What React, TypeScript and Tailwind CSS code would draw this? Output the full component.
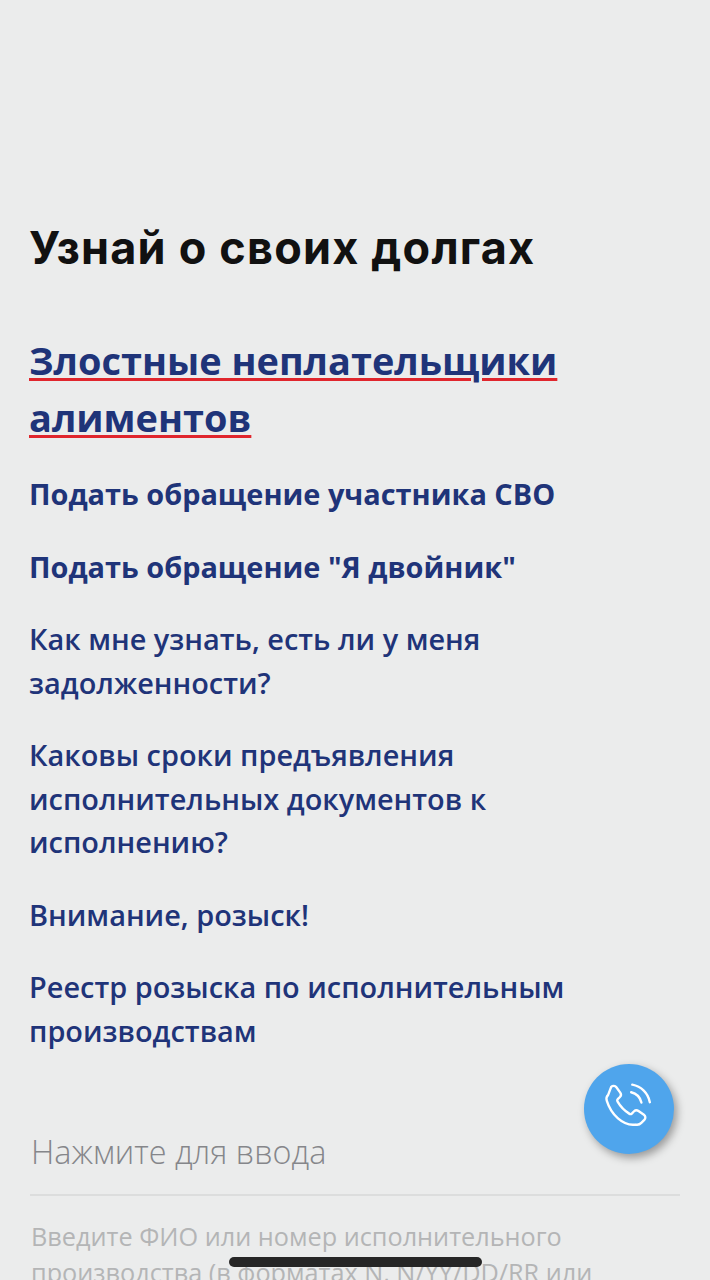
import type { ReactNode } from "react";

const links: { text: ReactNode; bold?: boolean }[] = [
  { text: "Подать обращение участника СВО", bold: true },
  { text: 'Подать обращение "Я двойник"', bold: true },
  { text: "Как мне узнать, есть ли у меня задолженности?" },
  { text: "Каковы сроки предъявления исполнительных документов к исполнению?" },
  { text: "Внимание, розыск!" },
  { text: "Реестр розыска по исполнительным производствам" },
];

function PhoneIcon() {
  return (
    <svg width="54" height="54" viewBox="0 0 50 50" fill="none" stroke="#ffffff" strokeWidth="2.2" strokeLinecap="round" strokeLinejoin="round">
      <path d="M8.5 4.5c1.5-1.300 3.600-1.200 4.800.4l3.600 4.900c.9 1.300.8 3-.3 4.100l-2 2c-.6.6-.7 1.400-.3 2.100 2.700 4.700 6.500 8.700 11.200 11.500.7.400 1.500.300 2.100-.3l2.100-2.100c1.100-1.100 2.800-1.200 4.100-.3l5 3.500c1.600 1.100 1.800 3.400.4 4.800l-2.800 2.800c-1.400 1.400-3.400 2-5.300 1.500C19.300 41.100 8.300 30 4.400 17.300c-.6-1.900-.1-4 1.300-5.400z" />
      <path d="M27 9.500c4.800 1.100 8.300 4.700 9.500 9.500" />
      <path d="M28 2.500c8.300 1.500 14.700 7.900 16.300 16.200" />
    </svg>
  );
}

export default function App() {
  return (
    <div className="relative h-[1280px] w-[710px] overflow-hidden bg-[#ebecec] font-['Open_Sans',sans-serif]">
      <div className="px-[29px] pt-[219px]">
        <h1 className="font-['Inter',sans-serif] text-[45px] leading-[57px] font-bold tracking-[1.200px] text-[#111111]">Узнай о своих долгах</h1>

        <a className="mt-[56px] block text-[37.900px] leading-[56.500px] font-bold text-[#1f3479] underline decoration-[#e0262d] decoration-[3px] underline-offset-[3px]">
          Злостные неплательщики алиментов
        </a>

        <ul className="mt-[27px] flex flex-col gap-[29px]">
          {links.map((link, i) => (
            <li key={i} className={`text-[28.900px] leading-[43.500px] text-[#1f3479] ${link.bold ? "font-bold" : "font-semibold"}`}>
              {link.text}
            </li>
          ))}
        </ul>

        <div className="mx-px mt-[43.500px] h-[100px] border-b-2 border-[#dcdddd] pl-px pt-[33px] text-[32.400px] leading-[44px] font-light text-[#85868a]">
          Нажмите для ввода
        </div>

        <p className="mt-[22px] pl-[2px] text-[25.250px] leading-[36px] text-[#b4b5b6]">
          Введите ФИО или номер исполнительного производства (в форматах N, N/YY/DD/RR или
        </p>
      </div>

      <button className="absolute left-[584px] top-[1064px] flex h-[90px] w-[90px] items-center justify-center rounded-full bg-[#4fa5ec] shadow-[3px_4px_8px_rgba(0,0,0,0.35)]">
        <PhoneIcon />
      </button>

      <div className="absolute left-[229px] top-[1257px] h-[10px] w-[253px] rounded-full bg-[#262626]" />
    </div>
  );
}
